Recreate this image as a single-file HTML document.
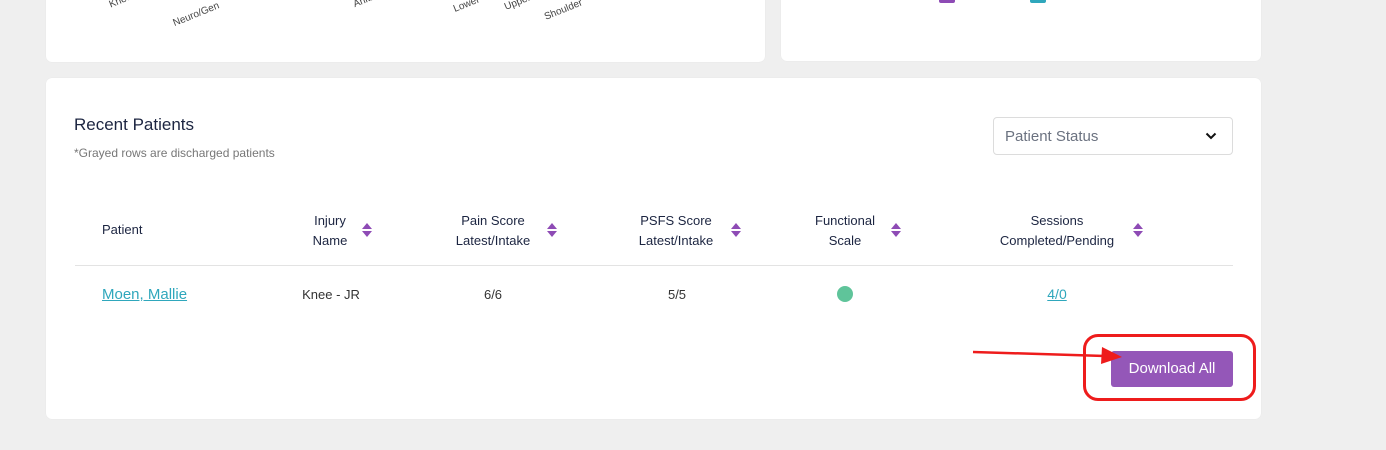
<!DOCTYPE html>
<html><head><meta charset="utf-8"><style>
*{margin:0;padding:0;box-sizing:border-box}
body{width:1386px;height:450px;background:#efefef;position:relative;overflow:hidden;font-family:"Liberation Sans",sans-serif;color:#1c2541}
.card{position:absolute;background:#fff;border-radius:6px;box-shadow:0 0 1px rgba(0,0,0,.08)}
.a{position:absolute;white-space:nowrap}
.rl{position:absolute;font-size:10px;color:#444;transform:rotate(-22deg);transform-origin:right center;white-space:nowrap}
.h{position:absolute;font-size:13px;text-align:center;line-height:20px;color:#1c2541;transform:translateX(-50%)}
.s{position:absolute;width:10px;height:16px}
.c{position:absolute;font-size:13px;transform:translateX(-50%);color:#333}
</style></head><body>
<div class="card" style="left:46px;top:-10px;width:719px;height:72px"></div>
<div class="card" style="left:781px;top:-10px;width:480px;height:71px"></div>
<div class="rl" style="left:108px;top:-9px">Knee</div>
<div class="rl" style="left:170px;top:0px">Neuro/Gen</div>
<div class="rl" style="left:352px;top:-10px">Ankle</div>
<div class="rl" style="left:452px;top:-6px">Lower</div>
<div class="rl" style="left:503px;top:-8px">Upper</div>
<div class="rl" style="left:542px;top:-3px">Shoulder</div>
<div class="a" style="left:939px;top:-6px;width:16px;height:9px;background:#8e4bb5;border-radius:2px"></div>
<div class="a" style="left:1030px;top:-6px;width:16px;height:9px;background:#2fa7bc;border-radius:2px"></div>

<div class="card" style="left:46px;top:78px;width:1215px;height:341px"></div>
<div class="a" style="left:74px;top:115px;font-size:17px;color:#1c2541">Recent Patients</div>
<div class="a" style="left:74px;top:146px;font-size:12px;color:#777">*Grayed rows are discharged patients</div>
<div class="a" style="left:993px;top:117px;width:240px;height:38px;border:1px solid #dcdcdc;border-radius:4px">
<span style="position:absolute;left:11px;top:10px;font-size:15px;color:#6b7280">Patient Status</span>
<svg style="position:absolute;right:15px;top:14px" width="12" height="8" viewBox="0 0 12 8"><path d="M1.5 1.5 6 6 10.5 1.5" fill="none" stroke="#111" stroke-width="2"/></svg>
</div>

<div class="a" style="left:102px;top:222px;font-size:13px">Patient</div>
<div class="h" style="left:330px;top:211px">Injury<br>Name</div>
<div class="h" style="left:493px;top:211px">Pain Score<br>Latest/Intake</div>
<div class="h" style="left:676px;top:211px">PSFS Score<br>Latest/Intake</div>
<div class="h" style="left:845px;top:211px">Functional<br>Scale</div>
<div class="h" style="left:1057px;top:211px">Sessions<br>Completed/Pending</div>
<svg class="s" style="left:362px;top:222px" viewBox="0 0 10 16"><path d="M5 1 10 7H0Z M0 9H10L5 15Z" fill="#8e4bb5"/></svg>
<svg class="s" style="left:547px;top:222px" viewBox="0 0 10 16"><path d="M5 1 10 7H0Z M0 9H10L5 15Z" fill="#8e4bb5"/></svg>
<svg class="s" style="left:731px;top:222px" viewBox="0 0 10 16"><path d="M5 1 10 7H0Z M0 9H10L5 15Z" fill="#8e4bb5"/></svg>
<svg class="s" style="left:891px;top:222px" viewBox="0 0 10 16"><path d="M5 1 10 7H0Z M0 9H10L5 15Z" fill="#8e4bb5"/></svg>
<svg class="s" style="left:1133px;top:222px" viewBox="0 0 10 16"><path d="M5 1 10 7H0Z M0 9H10L5 15Z" fill="#8e4bb5"/></svg>
<div class="a" style="left:75px;top:265px;width:1158px;height:1px;background:#e3e3e3"></div>

<div class="a" style="left:102px;top:286px;font-size:15px;color:#2fa7bc;text-decoration:underline">Moen, Mallie</div>
<div class="c" style="left:331px;top:287px">Knee - JR</div>
<div class="c" style="left:493px;top:287px">6/6</div>
<div class="c" style="left:677px;top:287px">5/5</div>
<div class="a" style="left:837px;top:286px;width:16px;height:16px;border-radius:50%;background:#5fc49a"></div>
<div class="c" style="left:1057px;top:286px;font-size:14px;color:#2fa7bc;text-decoration:underline">4/0</div>

<div class="a" style="left:1111px;top:351px;width:122px;height:36px;background:#9457b8;border-radius:3px;color:#fff;font-size:15px;text-align:center;line-height:36px">Download All</div>
<div class="a" style="left:1083px;top:334px;width:173px;height:67px;border:3px solid #ee1c1c;border-radius:15px"></div>
<svg class="a" style="left:970px;top:343px" width="160" height="22" viewBox="0 0 160 22"><path d="M3 9 135 13" stroke="#ee1c1c" stroke-width="2.5" fill="none"/><path d="M132 4 152 14 131 21Z" fill="#ee1c1c"/></svg>
</body></html>
